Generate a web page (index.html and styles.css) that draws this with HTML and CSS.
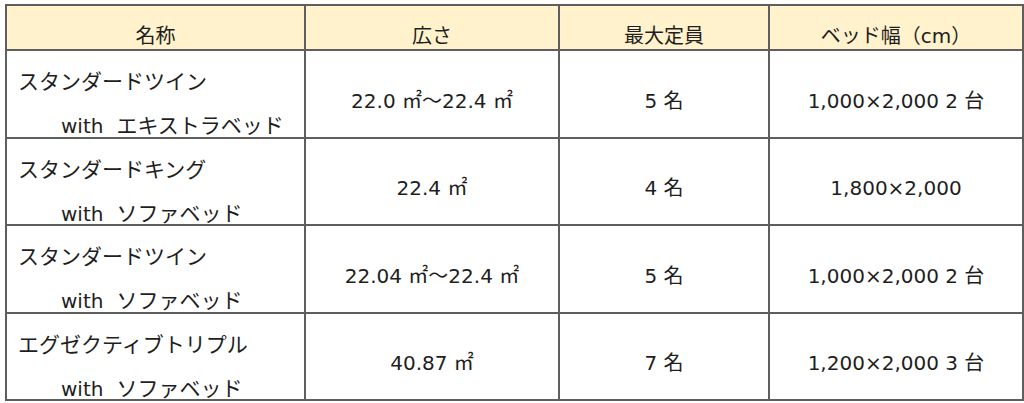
FILE: index.html
```html
<!DOCTYPE html>
<html lang="ja">
<head>
<meta charset="utf-8">
<link rel="stylesheet" href="styles.css">
</head>
<body>
<table class="rooms">
  <colgroup>
    <col class="c-name">
    <col class="c-area">
    <col class="c-cap">
    <col class="c-bed">
  </colgroup>
  <thead>
    <tr class="head">
      <th>名称</th>
      <th>広さ</th>
      <th>最大定員</th>
      <th>ベッド幅（cm）</th>
    </tr>
  </thead>
  <tbody>
    <tr class="r1">
      <td class="name"><div class="l1">スタンダードツイン</div><div class="l2"><span class="w">with</span><span class="jp">エキストラベッド</span></div></td>
      <td>22.0 ㎡～22.4 ㎡</td>
      <td>5 名</td>
      <td>1,000×2,000 2 台</td>
    </tr>
    <tr class="r2">
      <td class="name"><div class="l1">スタンダードキング</div><div class="l2"><span class="w">with</span><span class="jp">ソファベッド</span></div></td>
      <td>22.4 ㎡</td>
      <td>4 名</td>
      <td>1,800×2,000</td>
    </tr>
    <tr class="r3">
      <td class="name"><div class="l1">スタンダードツイン</div><div class="l2"><span class="w">with</span><span class="jp">ソファベッド</span></div></td>
      <td>22.04 ㎡～22.4 ㎡</td>
      <td>5 名</td>
      <td>1,000×2,000 2 台</td>
    </tr>
    <tr class="r4">
      <td class="name"><div class="l1">エグゼクティブトリプル</div><div class="l2"><span class="w">with</span><span class="jp">ソファベッド</span></div></td>
      <td>40.87 ㎡</td>
      <td>7 名</td>
      <td>1,200×2,000 3 台</td>
    </tr>
  </tbody>
</table>
</body>
</html>
```

FILE: styles.css
```css
html, body {
  margin: 0;
  padding: 0;
  background: #ffffff;
}
body {
  padding: 4px 0 0 5px;
  font-family: "DejaVu Sans", "Noto Sans CJK JP", sans-serif;
  font-size: 20px;
  color: #1e1e1e;
}
.rooms {
  border-collapse: collapse;
  table-layout: fixed;
  width: 1017px;
}
.c-name { width: 299px; }
.c-area { width: 254px; }
.c-cap { width: 210px; }
.c-bed { width: 254px; }
.rooms th,
.rooms td {
  border: 2px solid #5e5e5e;
  padding: 0;
  text-align: center;
  vertical-align: middle;
  font-weight: normal;
  white-space: nowrap;
}
.rooms .head th {
  background: #fff2cc;
  height: 45px;
  box-sizing: border-box;
  padding-top: 16px;
  line-height: 24px;
}
.rooms tbody tr { height: 87.75px; }
.rooms tbody tr.r2 { height: 87px; }
.rooms tbody td {
  box-sizing: border-box;
  padding-top: 14px;
  line-height: 24px;
}
.rooms tbody td.name {
  text-align: left;
  vertical-align: top;
  padding: 9px 0 0 11px;
  line-height: 44px;
}
.name .l1 {
  height: 44px;
  font-size: 21px;
}
.name .l2 {
  padding-left: 43px;
  height: 30px;
}
.name .w {
  margin-right: 13px;
}
.name .jp {
  font-size: 21px;
}
```
